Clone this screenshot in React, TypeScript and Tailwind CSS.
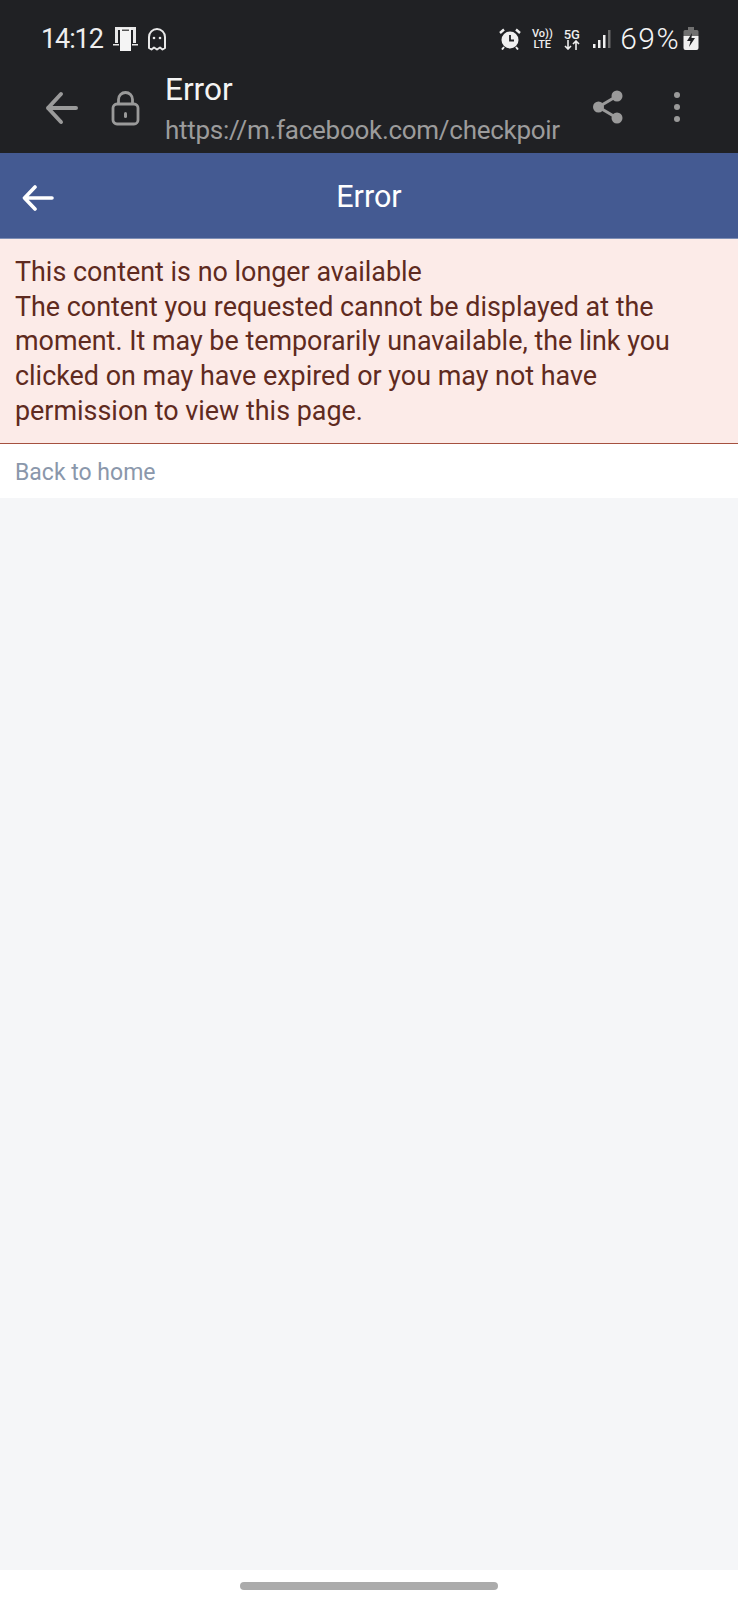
function StatusBar() {
  return (
    <div className="flex h-[62px] items-end justify-between pb-[8px] pl-[41px] pr-[39px] text-white">
      <div className="flex items-center">
        <span className="text-[27px] font-normal leading-[30px] tracking-[-1.1px] text-[#eeeeee]">14:12</span>
        <svg width="26" height="26" viewBox="0 0 26 26" className="ml-[9px]">
          <path d="M3 1h21v16h-3V4H6v13H3z" fill="#e8e8e8" />
          <path d="M1 18h6v1.5H1zM20 18h6v1.5h-6z" fill="#e8e8e8" />
          <rect x="8" y="2" width="11" height="23" fill="#f4f4f4" />
          <rect x="10" y="3.5" width="7" height="1.5" fill="#555" />
        </svg>
        <svg width="20" height="24" viewBox="0 0 20 24" className="ml-[9px]" fill="none" stroke="#e8e8e8" strokeWidth="2">
          <path d="M2 21V10a8 8 0 0 1 16 0v11l-2.5 1.5-2.5-2-3 2-3-2-2.5 2z" strokeLinejoin="round" />
          <circle cx="7" cy="11" r="1.3" fill="#e8e8e8" stroke="none" />
          <circle cx="13" cy="11" r="1.3" fill="#e8e8e8" stroke="none" />
        </svg>
      </div>
      <div className="flex items-center">
        <svg width="22" height="22" viewBox="0 0 22 22">
          <circle cx="11" cy="12" r="8.5" fill="#f0f0f0" />
          <path d="M11 7v5.5h4" fill="none" stroke="#202124" strokeWidth="1.8" />
          <path d="M1 5l4-3.5M21 5l-4-3.5" stroke="#f0f0f0" strokeWidth="2.4" />
          <path d="M5 19l-2 2.5M17 19l2 2.5" stroke="#f0f0f0" strokeWidth="2" />
        </svg>
        <div className="ml-[11px] flex w-[20px] flex-col items-center text-[11px] font-medium leading-[11px] text-[#eeeeee]">
          <span>Vo))</span>
          <span>LTE</span>
        </div>
        <div className="ml-[11px] flex w-[17px] flex-col items-center text-[13px] font-medium leading-[11px] text-[#eeeeee]">
          <span>5G</span>
          <svg width="16" height="10" viewBox="0 0 16 10" fill="none" stroke="#eeeeee" strokeWidth="1.6">
            <path d="M4 0v9M1 6l3 3 3-3M12 10V1M9 4l3-3 3 3" />
          </svg>
        </div>
        <svg width="19" height="20" viewBox="0 0 19 20" className="ml-[12px]">
          <rect x="1" y="15" width="2.5" height="4" fill="#f0f0f0" />
          <rect x="6" y="11" width="2.5" height="8" fill="#f0f0f0" />
          <rect x="11" y="6" width="2.5" height="13" fill="#f0f0f0" />
          <rect x="16" y="1" width="2.5" height="18" fill="#6b6b6b" />
        </svg>
        <span className="ml-[9px] text-[30px] font-light leading-[30px] tracking-[1.4px] text-[#f4f4f4]">69%</span>
        <svg width="16" height="24" viewBox="0 0 16 24" className="ml-[3px]">
          <rect x="5" y="0" width="6" height="3" fill="#707070" />
          <path d="M2 3h12a1.5 1.5 0 0 1 1.5 1.5V9H.5V4.5A1.5 1.5 0 0 1 2 3z" fill="#707070" />
          <path d="M.5 9h15v12a2 2 0 0 1-2 2h-11a2 2 0 0 1-2-2z" fill="#f0f0f0" />
          <path d="M9 6L4 14h3.5L6 20l6-9H8.5z" fill="#202124" />
        </svg>
      </div>
    </div>
  );
}

function BrowserBar() {
  return (
    <div className="flex h-[91px] items-start overflow-hidden pl-[45px]">
      <svg width="34" height="34" viewBox="0 0 34 34" className="mt-[29px] shrink-0" fill="none" stroke="#9a9a9a" strokeWidth="4" strokeLinecap="round" strokeLinejoin="round">
        <path d="M31 17H3M16 3L3 17l13 14" />
      </svg>
      <svg width="30" height="36" viewBox="0 0 30 36" className="ml-[32px] mt-[28px] shrink-0" fill="none" stroke="#9a9a9a" strokeWidth="2.8">
        <rect x="2" y="14" width="25" height="20" rx="4" />
        <path d="M7.5 14V9.5a7 7 0 0 1 14 0V14" />
        <rect x="13" y="22" width="3" height="6" rx="1.5" fill="#9a9a9a" stroke="none" />
      </svg>
      <div className="ml-[24px] w-[395px] shrink-0">
        <div className="mt-[8px] text-[31.5px] leading-[40px] text-[#f4f4f4]">Error</div>
        <div className="mt-[1px] whitespace-nowrap text-[26px] leading-[38px] tracking-[-0.28px] text-[#9c9c9c]">https://m.facebook.com/checkpoir</div>
      </div>
      <svg width="30" height="34" viewBox="0 0 30 34" className="ml-[33px] mt-[28px] shrink-0" fill="#9a9a9a">
        <circle cx="24" cy="6" r="5.5" />
        <circle cx="5.5" cy="17" r="5.5" />
        <circle cx="24" cy="28" r="5.5" />
        <path d="M24 6L5.5 17 24 28" fill="none" stroke="#9a9a9a" strokeWidth="3" />
      </svg>
      <div className="ml-[51px] mt-[30px] flex shrink-0 flex-col gap-[6px]">
        <span className="size-[6px] rounded-full bg-[#9a9a9a]" />
        <span className="size-[6px] rounded-full bg-[#9a9a9a]" />
        <span className="size-[6px] rounded-full bg-[#9a9a9a]" />
      </div>
    </div>
  );
}

export default function App() {
  return (
    <div className="flex h-[1600px] w-[738px] flex-col overflow-hidden bg-white font-['Roboto',sans-serif]">
      <div className="bg-[#202124]">
        <StatusBar />
        <BrowserBar />
      </div>
      <header className="relative flex h-[86px] items-center justify-center border-b border-[#7f8fb5] bg-[#445a92]">
        <svg width="32" height="26" viewBox="0 0 32 26" className="absolute left-[22px] top-[32px]" fill="none" stroke="white" strokeWidth="3.6" strokeLinecap="round" strokeLinejoin="round">
          <path d="M30 13H3M13 2L2.5 13 13 24" />
        </svg>
        <span className="mt-[2px] text-[30.5px] text-white">Error</span>
      </header>
      <div className="border-b border-[#a5513f] bg-[#fcebe8] pb-[14px] pl-[15px] pr-[15px] pt-[16px] text-[26.9px] leading-[34.7px] text-[#5f2a20]">
        <div>This content is no longer available</div>
        <div>
          The content you requested cannot be displayed at the moment. It may be temporarily unavailable, the link you clicked on may have expired or you may not have permission to view this page.
        </div>
      </div>
      <div className="h-[54px] bg-white pl-[15px] pt-[12px] text-[23px] leading-[33px] text-[#8a97ab]">Back to home</div>
      <div className="flex-1 bg-[#f5f6f8]" />
      <div className="flex h-[30px] items-start justify-center bg-white pt-[12px]">
        <div className="h-[8px] w-[258px] rounded-full bg-[#ababab]" />
      </div>
    </div>
  );
}
